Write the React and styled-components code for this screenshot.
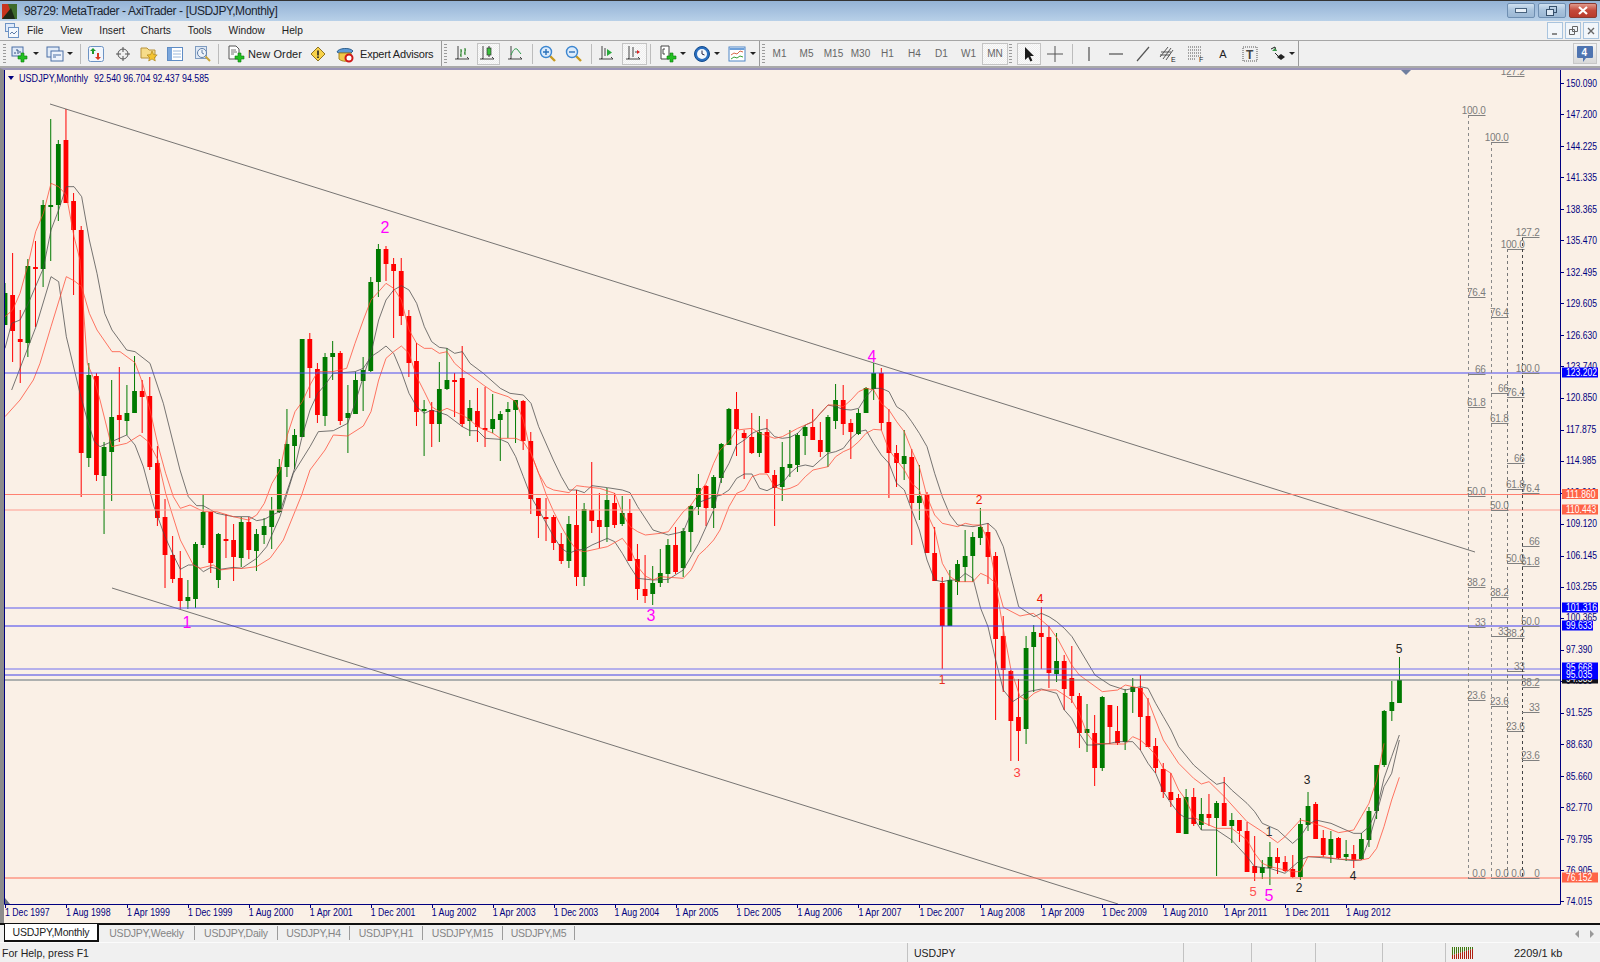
import React from 'react'
import styled, { createGlobalStyle } from 'styled-components'

const GlobalStyle = createGlobalStyle`
    html, body { margin: 0; padding: 0; background: #f0f0f0; overflow: hidden; }
    body { font-family: "Liberation Sans", Arial, sans-serif; color: #222; }
`

const Window = styled.div`
    width: 1600px;
    height: 962px;
    display: flex;
    flex-direction: column;
    overflow: hidden;
`

// Title bar

const TitleBar = styled.div`
    height: 20px;
    flex: none;
    display: flex;
    align-items: center;
    border-top: 1px solid #333;
    background: linear-gradient(#94b3d6, #b8d0e8);
    padding-left: 2px;
`

const TitleText = styled.span`
    margin-left: 7px;
    font-size: 12px;
    letter-spacing: -0.38px;
    color: #1c2530;
`

const WindowButtons = styled.div`
    margin-left: auto;
    margin-right: 3px;
    align-self: flex-start;
    display: flex;
    gap: 3px;
    padding-top: 2px;
`

const WindowButton = styled.div`
    width: ${ p => p.$w }px;
    height: 15px;
    display: flex;
    align-items: center;
    justify-content: center;
    border: 1px solid ${ p => p.$close ? '#8a3a32' : '#6f8fb2' };
    border-radius: 2px;
    box-sizing: border-box;
    background: ${ p => p.$close ? 'linear-gradient(#e09a8c, #c4483a 50%, #b83a2c)' : 'linear-gradient(#cfe0f0, #a8c2dc 50%, #9cb8d4)' };
`

// Menu bar

const MenuBar = styled.div`
    height: 19px;
    flex: none;
    display: flex;
    align-items: center;
    background: #f0f0f0;
    padding-left: 5px;
`

const MenuItem = styled.span`
    font-size: 10.2px;
    color: #222;
    margin-left: ${ p => p.$ml }px;
`

const MdiButtons = styled.div`
    margin-left: auto;
    display: flex;
    gap: 2px;
    padding-right: 1px;
`

const MdiButton = styled.div`
    width: 16px;
    height: 17px;
    border: 1px solid #a9c4de;
    box-sizing: border-box;
    background: #f2f6fa;
    display: flex;
    align-items: center;
    justify-content: center;
`

// Toolbar

const Toolbar = styled.div`
    height: 25px;
    flex: none;
    display: flex;
    align-items: center;
    background: #f0f0f0;
    border-top: 1px solid #a6a6a6;
    border-bottom: 2px solid #a9a9a9;
    padding-left: 3px;
    box-sizing: content-box;
`

const Grip = styled.div`
    width: 3px;
    height: 20px;
    flex: none;
    margin-left: ${ p => p.$ml || 0 }px;
    margin-right: ${ p => p.$mr || 0 }px;
    background: repeating-linear-gradient(#9a9a9a 0 1px, transparent 1px 3px);
`

const ToolSep = styled.div`
    width: 1px;
    height: ${ p => p.$dark ? 25 : 20 }px;
    flex: none;
    margin-left: ${ p => p.$ml }px;
    margin-right: ${ p => p.$mr }px;
    background: ${ p => p.$dark ? '#9b9b9b' : '#bcbcbc' };
`

const ToolButton = styled.div`
    width: ${ p => p.$w || 26 }px;
    height: 22px;
    flex: none;
    margin-left: ${ p => p.$ml || 0 }px;
    padding-left: ${ p => p.$pl || 0 }px;
    display: flex;
    align-items: center;
    justify-content: ${ p => p.$pl ? 'flex-start' : 'center' };
    box-sizing: border-box;
    font-size: 11px;
    color: #222;
    white-space: nowrap;
    ${ p => p.$active && `
        border: 1px solid #c4c4c4;
        background: repeating-conic-gradient(#fafafa 0 25%, #efefef 0 50%) 0 0 / 2px 2px;
    ` }
`

const ToolLabel = styled.span`
    margin-left: ${ p => p.$ml }px;
    font-size: 11px;
    letter-spacing: ${ p => p.$ls }px;
`

const Caret = styled.span`
    width: 0;
    height: 0;
    margin-left: ${ p => p.$ml }px;
    border-left: 3px solid transparent;
    border-right: 3px solid transparent;
    border-top: 3px solid #222;
`

const PeriodButton = styled(ToolButton)`
    font-size: 10px;
    color: #666;
`

const BubbleButton = styled.div`
    margin-left: auto;
    margin-right: 3px;
    width: 24px;
    height: 21px;
    display: flex;
    align-items: center;
    justify-content: center;
    background: linear-gradient(#f4f4f4, #d9d9d9);
    border: 1px solid #c8c8c8;
    box-sizing: border-box;
`

// Chart

const ChartArea = styled.div`
    flex: 1;
    min-height: 0;
    background: #faf0e6;
    border-top: 2px solid #9a94b8;
    border-left: 4px solid #8c8c8c;
    box-sizing: border-box;
`

const ChartSvg = styled.svg`
    display: block;
    width: 1596px;
    height: 853px;
`

const ScaleText = styled.text`
    font-family: "Liberation Sans", Arial, sans-serif;
    font-size: 10px;
    fill: ${ p => p.$fill || '#000080' };
`

const FibText = styled.text`
    font-family: "Liberation Sans", Arial, sans-serif;
    font-size: 10px;
    letter-spacing: -0.25px;
    fill: #7c7c7c;
    text-anchor: end;
`

const WaveText = styled.text`
    font-family: "Liberation Sans", Arial, sans-serif;
    font-size: ${ p => p.$size }px;
    fill: ${ p => p.$fill };
    text-anchor: middle;
`

// Tabs and status bar

const TabBar = styled.div`
    height: 17px;
    flex: none;
    display: flex;
    align-items: stretch;
    border-top: 2px solid #111;
    background: #f0f0f0;
    padding-left: 4px;
`

const ActiveTab = styled.div`
    width: 95px;
    height: 18px;
    margin-top: -1px;
    flex: none;
    display: flex;
    align-items: center;
    justify-content: center;
    background: #fff;
    border: 1px solid #111;
    border-top: 0;
    border-right-width: 2px;
    border-bottom-width: 2px;
    box-sizing: border-box;
    font-size: 10.5px;
    letter-spacing: -0.02em;
    color: #222;
`

const Tab = styled.div`
    width: ${ p => p.$w }px;
    height: 14px;
    margin-top: 1px;
    flex: none;
    display: flex;
    align-items: center;
    justify-content: center;
    border-right: 1px solid #9c9c9c;
    box-sizing: border-box;
    font-size: 10.5px;
    letter-spacing: -0.02em;
    color: #858585;
`

const TabArrows = styled.div`
    margin-left: auto;
    margin-right: 6px;
    display: flex;
    align-items: center;
    gap: 11px;
`

const TabArrow = styled.span`
    width: 0;
    height: 0;
    border-top: 4px solid transparent;
    border-bottom: 4px solid transparent;
    ${ p => p.$right ? 'border-left: 4px solid #999;' : 'border-right: 4px solid #999;' }
`

const StatusBar = styled.div`
    height: 20px;
    flex: none;
    display: flex;
    align-items: center;
    border-top: 1px solid #fbfbfb;
    background: #f0f0f0;
    font-size: 10.5px;
    color: #222;
    box-sizing: border-box;
`

const StatusCell = styled.div`
    width: ${ p => p.$w }px;
    height: 19px;
    flex: none;
    display: flex;
    align-items: center;
    padding-left: ${ p => p.$pl || 0 }px;
    box-sizing: border-box;
    border-right: ${ p => p.$plain ? 0 : '1px solid #c2c2c2' };
`

const MemoryText = styled.span`
    margin-left: 40px;
    font-size: 11px;
`

// Icons

const Svg = ({ w = 18, h = 18, vb, children }) => (
    <svg width={ w } height={ h } viewBox={ vb || `0 0 ${ w } ${ h }` }>{ children }</svg>
)

const Plus = ({ x, y, s = 1 }) => (
    <path
        transform={ `translate(${ x } ${ y }) scale(${ s })` }
        d="M3 0h3v3h3v3h-3v3h-3v-3h-3v-3h3z"
        fill="#22c022" stroke="#0f7a0f" strokeWidth="0.6"
    />
)

const Axes = () => <path d="M3 1v13M0 14h14M3 14l-1-1M14 14l-2-2" stroke="#444" fill="none" />

const NewChartIcon = () => (
    <Svg>
        <rect x="1" y="2" width="11" height="9" fill="#dfe9f7" stroke="#4a6fa5" />
        <path d="M3 8h2M5 5h2v4M8 7h2" stroke="#2f4f80" fill="none" />
        <Plus x={ 7 } y={ 8 } />
    </Svg>
)
const ProfilesIcon = () => (
    <Svg>
        <rect x="1" y="2" width="12" height="10" fill="#e3ecf8" stroke="#4a6fa5" />
        <rect x="5" y="6" width="12" height="10" fill="#eef3fb" stroke="#4a6fa5" />
        <path d="M7 10h8M7 12h3" stroke="#4a6fa5" />
    </Svg>
)
const WatchIcon = () => (
    <Svg>
        <rect x="1.5" y="1.5" width="15" height="15" rx="2" fill="#f2f6fc" stroke="#6d93c4" />
        <path d="M6 3l3 3H7v3H5V6H3z" fill="#1f9a2a" />
        <path d="M11 15l-3-3h2V8h2v4h2z" fill="#d93a20" />
    </Svg>
)
const CrossIcon = () => (
    <Svg>
        <circle cx="9" cy="9" r="5" fill="none" stroke="#555" />
        <path d="M9 2v5M9 11v5M2 9h5M11 9h5" stroke="#555" />
    </Svg>
)
const StarFolderIcon = () => (
    <Svg>
        <path d="M1 3h6l2 2h6v8H1z" fill="#f6dc8a" stroke="#b8923a" />
        <path d="M12 6l1.6 3.6 3.6.4-2.7 2.4.8 3.6-3.3-2-3.3 2 .8-3.6L7 10l3.6-.4z" fill="#f4c430" stroke="#a67c12" strokeWidth="0.6" />
    </Svg>
)
const TerminalIcon = () => (
    <Svg>
        <rect x="1.5" y="2.5" width="15" height="13" fill="#fff" stroke="#5f8cc4" />
        <rect x="2" y="3" width="4" height="12" fill="#7aa6dc" />
        <path d="M7 6h8M7 9h8M7 12h8" stroke="#9cb8da" />
    </Svg>
)
const TesterIcon = () => (
    <Svg>
        <rect x="1.5" y="1.5" width="11" height="12" fill="#dfe8f4" stroke="#7f9cc0" />
        <circle cx="8" cy="8" r="4.5" fill="#eef3f9" stroke="#5f7ea8" />
        <path d="M8 5v3l2 1" stroke="#5f7ea8" fill="none" />
        <path d="M11.5 11.5l4.5 4.5" stroke="#c9a43a" strokeWidth="2" />
    </Svg>
)
const OrderIcon = () => (
    <Svg>
        <path d="M2 1h7l3 3v10H2z" fill="#fff" stroke="#555" />
        <path d="M4 5h5M4 7h6M4 9h3" stroke="#777" />
        <Plus x={ 8 } y={ 8 } />
    </Svg>
)
const WarningIcon = () => (
    <Svg w={ 16 } h={ 16 }>
        <path d="M8 1l7 7-7 7-7-7z" fill="#f8d24a" stroke="#8f7420" />
        <path d="M8 4.5v5" stroke="#222" strokeWidth="1.6" />
        <rect x="7.2" y="10.4" width="1.6" height="1.6" fill="#222" />
    </Svg>
)
const ExpertIcon = () => (
    <Svg>
        <path d="M1 7c1-4 13-5 16-1l-2 2H3z" fill="#5d9ad6" stroke="#2f618f" />
        <path d="M3 8h12v6c-2 3-9 3-12 0z" fill="#f0c84a" stroke="#a68620" />
        <circle cx="13" cy="13" r="3.5" fill="#fff" stroke="#d01818" strokeWidth="2" />
    </Svg>
)
const BarsIcon = () => (
    <Svg>
        <Axes />
        <path d="M6 4v8M5 10h1M6 6h1M10 3v7M9 8h1M10 5h1" stroke="#1a7a1a" fill="none" />
    </Svg>
)
const CandleIcon = () => (
    <Svg>
        <Axes />
        <path d="M9 1v11" stroke="#333" />
        <rect x="7" y="3" width="4" height="7" fill="#3cc03c" stroke="#333" strokeWidth="0.7" />
    </Svg>
)
const LineIcon = () => (
    <Svg>
        <Axes />
        <path d="M3 10c2-5 4-7 6-6l4 5" stroke="#2c9a4a" fill="none" />
    </Svg>
)
const ZoomIcon = ({ plus }) => (
    <Svg>
        <path d="M11 11l5 5" stroke="#c89a20" strokeWidth="2.4" />
        <circle cx="7" cy="7" r="5.5" fill="#dcebfb" stroke="#3c86d0" strokeWidth="1.4" />
        <path d={ plus ? 'M4 7h6M7 4v6' : 'M4 7h6' } stroke="#2a70b8" strokeWidth="1.4" />
    </Svg>
)
const AutoScrollIcon = () => (
    <Svg>
        <Axes />
        <path d="M6 3v8" stroke="#444" />
        <path d="M8 4l5 3.5-5 3.5z" fill="#27a83a" />
    </Svg>
)
const ShiftIcon = () => (
    <Svg>
        <Axes />
        <path d="M7 2v10" stroke="#444" />
        <path d="M9 7h3" stroke="#444" />
        <path d="M14 7l-3-2v4z" fill="#d22" />
    </Svg>
)
const IndicatorIcon = () => (
    <Svg>
        <path d="M2 1h8v13H2z" fill="#fff" stroke="#444" />
        <path d="M4 4h2M4 4v5h2" stroke="#444" fill="none" />
        <Plus x={ 8 } y={ 8 } />
    </Svg>
)
const ClockIcon = () => (
    <Svg>
        <circle cx="9" cy="9" r="7.5" fill="#2a6fc0" stroke="#124a8c" />
        <circle cx="9" cy="9" r="5" fill="#f4f8fc" />
        <path d="M9 5.5V9l2.5 1" stroke="#224" fill="none" />
    </Svg>
)
const TemplateIcon = () => (
    <Svg>
        <rect x="1" y="2" width="16" height="14" fill="#fff" stroke="#4f86c6" />
        <path d="M1.5 3h15v2h-15z" fill="#6fa1da" />
        <path d="M3 10l3-2 3 1 3-3 3 1" stroke="#d86a4a" fill="none" />
        <path d="M3 14l3-2 3 1 3-2 3 1" stroke="#3aa03a" fill="none" />
    </Svg>
)
const CursorIcon = () => (
    <Svg>
        <path d="M5 2v13l3.2-3 2.2 4.5 2-1-2.2-4.4H14z" fill="#1a1a1a" />
    </Svg>
)
const PlusLineIcon = () => <Svg><path d="M9 1v16M1 9h16" stroke="#555" /></Svg>
const VLineIcon = () => <Svg><path d="M9 2v14" stroke="#666" strokeWidth="1.4" /></Svg>
const HLineIcon = () => <Svg><path d="M2 9h14" stroke="#666" strokeWidth="1.4" /></Svg>
const TrendIcon = () => <Svg><path d="M3 16L15 2" stroke="#555" strokeWidth="1.2" /></Svg>
const ChannelIcon = () => (
    <Svg w={ 20 } vb="0 0 20 18">
        <path d="M1 12L9 2M4 14L12 3M7 15L14 5M2 7h10M1 10h10" stroke="#555" fill="none" />
        <text x="12" y="17" fontSize="7" fill="#222" fontFamily="Liberation Sans">E</text>
    </Svg>
)
const FiboIcon = () => (
    <Svg w={ 20 } vb="0 0 20 18">
        <path d="M2 2h13M2 5h13M2 8h13M2 11h13M2 14h8" stroke="#555" strokeDasharray="1 1" fill="none" />
        <text x="13" y="17" fontSize="7" fill="#222" fontFamily="Liberation Sans">F</text>
    </Svg>
)
const LabelIcon = () => (
    <Svg>
        <path d="M2 2h14v14H2z" fill="none" stroke="#555" strokeDasharray="1 1" />
        <text x="5" y="14" fontSize="12" fontWeight="bold" fill="#444" fontFamily="Liberation Sans">T</text>
    </Svg>
)
const ArrowsIcon = () => (
    <Svg>
        <path d="M2 4l4-2 1 4M6 8l3 3" stroke="#222" fill="none" />
        <path d="M8 12l4-3 4 3-4 3z" fill="#222" />
        <path d="M3 6l3-3 2 3z" fill="#3a9a4a" />
    </Svg>
)
const BubbleIcon = () => (
    <svg width="18" height="18" viewBox="0 0 18 18">
        <path d="M2 1h14a1 1 0 0 1 1 1v10a1 1 0 0 1-1 1h-6l-3 4v-4H2a1 1 0 0 1-1-1V2a1 1 0 0 1 1-1z" fill="#4f74b0" />
        <text x="5.5" y="11" fontSize="10" fontWeight="bold" fill="#fff" fontFamily="Liberation Sans">4</text>
    </svg>
)
const AppLogo = () => (
    <svg width="15" height="15" viewBox="0 0 15 15">
        <rect width="15" height="15" fill="#7d1c14" />
        <path d="M0 0h15v6L8 15H0z" fill="#c8341e" />
        <path d="M6 0h9v15H11z" fill="#3f6b2c" />
        <path d="M0 15L9 4l4 11z" fill="#1e2a18" />
    </svg>
)
const MenuChartIcon = () => (
    <svg width="14" height="15" viewBox="0 0 14 15">
        <rect x="0.5" y="0.5" width="9" height="8" fill="#dfeafa" stroke="#6d93c4" />
        <rect x="3.5" y="4.5" width="10" height="10" fill="#f4f8fd" stroke="#6d93c4" />
        <path d="M5 11l2-2 2 2 3-3" stroke="#5f7ea8" fill="none" />
    </svg>
)
const SignalIcon = () => (
    <svg width="22" height="12" viewBox="0 0 22 12">
        { Array.from({ length: 11 }, (_, i) => (
            <g key={ i }>
                <path d={ `M${ i * 2 + 0.5 } 0V${ 8 - i * 0.6 }` } stroke="#3f7a10" />
                <path d={ `M${ i * 2 + 0.5 } ${ 8 - i * 0.6 }V12` } stroke="#b02010" />
            </g>
        )) }
    </svg>
)

// Bars are [colour, high, body top, body bottom, low] in page pixels, read off the screenshot
const bars = [
    ['g',283,293,325,325],['r',253,295,331,362],['r',310,339,342,383],['g',259,266,343,357],['r',241,267,269,327],
    ['g',200,205,269,287],['g',119,205,207,261],['g',140,144,205,221],['r',109,140,203,203],['r',193,201,230,295],
    ['r',226,230,453,497],['g',363,375,458,467],['r',373,376,475,481],['g',442,447,476,534],['g',380,417,452,501],
    ['r',367,415,420,442],['g',385,413,421,435],['g',356,391,413,413],['r',380,391,397,433],['r',377,396,467,470],
    ['r',446,463,518,526],['r',499,517,555,588],['r',536,555,579,583],['r',551,578,601,609],['g',580,597,601,609],
    ['g',542,544,599,608],['g',495,512,545,548],['r',512,512,563,573],['g',533,534,580,588],['r',514,539,541,558],
    ['r',524,540,557,581],['g',517,522,558,567],['r',517,522,550,559],['g',529,534,551,571],['g',518,526,535,544],
    ['g',497,510,527,549],['g',459,467,512,513],['g',409,444,467,477],['g',429,435,446,469],['g',339,339,437,437],
    ['r',333,339,368,398],['r',363,369,415,423],['g',353,357,416,426],['g',341,353,357,380],['r',351,353,421,425],
    ['g',385,413,418,453],['g',372,380,414,414],['g',357,370,381,411],['g',277,282,371,372],['g',244,249,282,297],
    ['r',246,249,264,281],['r',258,264,271,338],['r',258,271,316,325],['r',310,316,363,377],['r',343,361,412,426],
    ['g',400,409,411,456],['r',402,410,424,447],['g',362,389,424,442],['g',348,380,389,390],['r',373,380,381,417],
    ['r',346,378,424,427],['g',400,408,421,436],['r',388,411,427,442],['r',387,428,429,447],['g',394,419,429,433],
    ['g',411,414,420,461],['g',402,409,412,438],['g',400,400,410,443],['r',400,401,441,450],['r',432,441,499,514],
    ['r',498,498,516,538],['r',498,517,518,541],['r',515,517,543,550],['r',533,544,561,564],['g',516,524,561,568],
    ['r',490,525,577,586],['g',503,509,577,586],['r',462,510,521,533],['r',493,520,527,548],['g',488,500,527,542],
    ['r',493,503,525,528],['g',496,513,524,526],['r',499,513,561,561],['r',544,559,589,600],['r',555,589,596,603],
    ['g',566,583,594,605],['g',549,573,583,587],['g',539,545,574,583],['r',527,545,572,574],['g',528,531,568,577],
    ['g',505,506,532,552],['g',474,488,507,515],['r',485,486,508,526],['g',475,477,508,528],['g',443,444,478,483],
    ['g',408,409,445,445],['r',392,409,429,456],['r',430,433,438,479],['r',413,437,453,454],['g',416,432,453,457],
    ['r',419,432,473,473],['r',470,475,488,526],['g',442,467,487,501],['g',430,464,468,477],['g',433,435,465,472],
    ['g',425,427,436,455],['r',409,427,440,440],['r',422,440,452,457],['g',415,417,452,467],['g',384,400,421,429],
    ['r',385,400,424,435],['r',419,423,432,459],['g',409,413,434,435],['g',387,388,413,413],['g',363,373,389,400],
    ['r',368,373,423,430],['r',409,422,453,498],['r',445,453,463,487],['g',430,456,464,480],['r',449,457,503,545],
    ['g',465,496,503,520],['r',492,495,553,553],['r',527,553,581,581],['r',577,583,626,669],['g',570,580,626,626],
    ['g',560,564,582,595],['g',530,556,567,582],['g',532,537,556,582],['g',508,527,538,545],['r',523,532,557,584],
    ['r',552,556,639,720],['r',616,636,670,692],['r',670,671,721,761],['r',679,717,731,761],['g',636,648,729,744],
    ['g',625,632,647,692],['r',607,633,637,669],['r',626,637,673,688],['g',633,661,674,682],['r',655,661,689,710],
    ['r',646,678,696,703],['r',693,696,733,748],['g',704,729,733,752],['r',715,733,768,786],['g',696,697,768,771],
    ['r',705,705,727,744],['r',706,731,743,745],['g',689,693,742,750],['g',678,687,692,713],['r',675,688,717,750],
    ['r',698,716,747,747],['r',738,746,768,773],['r',763,769,792,798],['r',773,792,800,807],['r',794,798,833,833],
    ['g',789,797,834,834],['r',788,797,824,826],['g',798,814,825,830],['r',794,814,818,826],['g',801,803,818,876],
    ['r',777,803,826,826],['g',813,820,826,843],['r',820,820,831,842],['r',822,831,872,872],['r',836,866,873,881],
    ['g',860,867,873,879],['g',842,857,868,885],['r',848,857,863,874],['r',856,862,871,872],['r',855,869,877,878],
    ['g',818,824,877,880],['g',792,806,825,831],['r',802,804,839,839],['r',830,838,855,857],['g',831,839,855,863],
    ['r',837,838,858,859],['g',840,854,857,861],['r',845,854,860,868],['g',833,839,859,860],['g',807,811,840,847],
    ['g',765,765,811,819],['g',710,711,765,767],['g',681,702,711,721],['g',657,680,703,703],
]

const BAR_STEP = 7.62
const barX = i => 5 + i * BAR_STEP

// The crops were 3x, so the traced points go back to page pixels from the crop origin
const trace = (ox, oy, pts) => pts.map(([x, y]) => [ox + x / 3, oy + y / 3])

const blackA = [
    ...trace(0, 90, [[15,775],[35,700],[60,690],[85,640],[130,535],[153,420],[176,360],[199,290],[222,290],[245,320],[268,450],[291,550],[314,670],[336,720],[380,780],[405,785],[450,820]]),
    ...trace(0, 360, [[490,130],[540,330],[565,410],[590,437],[610,437],[650,460],[700,470],[748,470],[770,482],[793,478],[816,465],[840,455],[862,390],[884,325],[905,235],[930,150],[953,100],[975,75],[1000,40]]),
    ...trace(340, 220, [[45,455],[70,445],[93,410],[116,395],[138,378],[161,400],[184,455],[207,520],[230,560],[253,580],[275,570],[321,585],[367,620],[390,632],[413,632],[436,655],[481,658],[504,668],[527,710],[550,770],[573,830],[619,910],[641,950],[664,985],[687,1000],[710,990],[733,988],[756,975],[802,955],[824,965],[847,1000],[870,1040],[893,1075],[939,1080],[985,1078],[1030,1050],[1076,970],[1121,870]]),
    ...trace(700, 350, [[65,380],[87,340],[110,285],[133,270],[156,250],[179,240],[201,235],[224,260],[247,265],[270,262],[293,250],[316,225],[339,215],[361,190],[384,165],[407,170],[430,178],[453,180],[476,175],[498,140],[521,115],[544,115],[567,125],[590,170],[613,185],[635,215],[658,250],[681,290],[704,370],[727,440],[750,495],[773,525],[819,530],[842,525],[864,520],[887,540],[910,590],[933,680],[956,770],[979,785],[1002,800],[1024,790],[1047,800],[1070,815],[1093,835],[1116,860]]),
    ...trace(1000, 640, [[285,105],[330,135],[376,150],[421,140],[444,145],[467,190],[490,230],[513,270],[536,320],[581,375],[627,415],[650,433],[673,427],[695,450],[741,490],[764,515],[787,550],[810,560],[833,570],[855,590],[878,610],[901,590],[924,555],[947,540],[993,550],[1038,570],[1061,580],[1084,580],[1107,560],[1130,510],[1152,415],[1175,350],[1198,285]]),
]

const blackB = [
    ...trace(0, 90, [[35,900],[108,710],[153,560],[176,575],[199,740]]),
    ...trace(0, 360, [[240,100],[262,180],[283,245],[300,260],[335,245],[380,225],[405,255],[430,320],[462,440],[495,530],[520,585],[541,628],[565,615],[588,615],[610,635],[633,622],[660,628],[700,622],[725,625],[770,595],[800,560],[840,470],[880,340],[930,260],[955,215],[1000,212]]),
    ...trace(340, 220, [[23,610],[45,550],[70,470],[93,400],[116,300],[138,240],[161,210],[184,197],[207,210],[230,250],[253,320],[275,365],[298,382],[321,385],[344,400],[367,395],[390,430],[430,460],[481,505],[510,520],[550,525],[573,550],[596,620],[640,720],[664,770],[687,810],[710,810],[733,818],[756,797],[802,803],[847,810],[870,818],[893,860],[939,930],[985,945],[1030,935],[1053,880]]),
    ...trace(700, 350, [[0,456],[41,440],[64,435],[87,420],[110,385],[133,372],[156,372],[179,415],[201,422],[224,410],[247,400],[270,370],[293,350],[316,345],[339,350],[361,330],[384,310],[407,305],[430,295],[453,265],[476,245],[498,240],[521,280],[544,315],[567,340],[590,400],[613,420],[635,480],[658,540],[681,630],[704,690],[727,695],[750,690],[773,690],[796,670],[819,685],[842,775],[864,830],[887,930],[910,1020]]),
    ...trace(1000, 640, [[38,185],[61,170],[84,155],[124,147],[170,160],[193,210],[215,235],[238,280],[261,315],[284,315],[330,310],[353,305],[398,305],[421,330],[444,370],[467,400],[490,455],[513,490],[536,520],[558,535],[581,535],[604,570],[650,570],[695,600],[741,650],[764,680],[810,685],[855,700],[878,680],[901,660],[924,650],[993,655],[1061,662],[1084,660],[1107,600],[1130,520],[1152,440],[1175,400],[1198,300]]),
]

const redA = [
    ...trace(0, 90, [[15,680],[38,660],[60,610],[85,520],[107,425],[130,370],[153,280],[176,290],[199,315],[222,440],[240,510]]),
    ...trace(0, 360, [[262,10],[283,60],[300,120],[335,260],[380,250],[420,225],[445,245],[474,300],[497,400],[541,540],[580,615],[600,625],[640,615],[660,630],[700,625],[730,625],[770,620],[810,595],[850,540],[905,405],[930,330],[975,270],[1000,225]]),
    ...trace(340, 220, [[23,648],[70,618],[93,575],[116,480],[138,415],[161,395],[184,378],[207,400],[230,470],[253,515],[275,560],[298,575],[321,565],[367,585],[390,600],[413,620],[436,630],[459,640],[481,655],[527,655],[550,665],[573,700],[596,760],[619,825],[641,875],[664,920],[687,960],[710,990],[733,995],[756,990],[802,980],[847,955],[870,985],[893,1040],[916,1068],[939,1080],[961,1070],[1030,1075],[1053,1050],[1076,1005],[1098,985],[1121,960]]),
    ...trace(700, 350, [[60,540],[87,470],[110,430],[133,420],[156,380],[179,372],[201,372],[224,410],[247,420],[270,415],[293,405],[316,380],[339,360],[384,350],[407,320],[430,305],[453,295],[476,275],[498,250],[521,238],[544,240],[567,300],[590,330],[613,360],[635,400],[658,420],[681,490],[704,540],[727,640],[750,680],[773,695],[819,695],[842,670],[864,680],[887,700],[905,810],[933,960],[960,1040],[979,1050],[1002,1030],[1024,1020],[1070,1020]]),
    ...trace(1000, 640, [[193,165],[215,180],[238,220],[261,280],[284,310],[330,312],[376,312],[398,290],[421,300],[444,320],[467,345],[490,385],[513,400],[536,450],[558,480],[581,530],[604,545],[650,565],[695,565],[741,600],[764,640],[787,670],[810,680],[855,690],[878,695],[901,695],[924,650],[970,650],[1016,657],[1084,660],[1107,655],[1130,625],[1152,560],[1175,480],[1198,412]]),
]

const redB = [
    ...trace(0, 360, [[15,170],[60,120],[100,60],[120,10]]),
    ...trace(0, 90, [[153,710],[199,560],[222,572],[245,590],[268,670],[291,720],[336,785],[360,785],[405,818],[428,880]]),
    ...trace(0, 360, [[450,150],[475,260],[497,340],[520,410],[541,445],[570,435],[611,455],[650,455],[700,470],[745,480],[770,465],[793,430],[816,370],[840,330],[862,225],[885,155],[907,125],[930,75],[953,35],[998,35]]),
    ...trace(340, 220, [[20,445],[45,370],[70,300],[93,240],[116,215],[138,190],[161,205],[184,240],[207,330],[230,370],[253,385],[275,385],[298,400],[321,395],[344,430],[367,450],[390,465],[430,495],[459,515],[504,530],[527,545],[550,600],[573,700],[596,760],[619,800],[641,810],[687,818],[710,797],[733,800],[779,805],[824,820],[847,880],[870,920],[893,935],[916,945],[961,940],[985,935],[1007,905],[1030,875],[1053,855],[1098,790],[1121,730]]),
    ...trace(700, 350, [[60,300],[87,275],[110,240],[156,235],[179,250],[224,265],[247,260],[293,235],[316,225],[339,215],[361,190],[384,165],[407,165],[430,170],[453,150],[476,125],[498,115],[521,120],[544,160],[567,180],[590,215],[613,245],[635,300],[658,350],[681,440],[704,495],[727,520],[773,530],[796,520],[819,525],[842,525],[864,570],[887,690],[910,772],[960,798],[1000,790],[1047,830],[1075,870]]),
    ...trace(1000, 640, [[215,75],[238,105],[307,155],[353,150],[376,135],[421,145],[444,180],[467,240],[490,300],[536,370],[581,415],[604,432],[627,425],[673,470],[741,545],[787,575],[833,608],[855,590],[878,565],[901,540],[924,545],[970,560],[1016,578],[1061,570],[1084,530],[1107,490],[1130,420],[1152,310]]),
]

const bands = [
    { pts: blackA, color: '#4a4a4a' },
    { pts: blackB, color: '#4a4a4a' },
    { pts: redA, color: '#ff4a34' },
    { pts: redB, color: '#ff4a34' },
]

const hLines = [
    { y: 373, color: '#4a4af0' },
    { y: 494.5, color: '#ff8070' },
    { y: 510, color: '#ff9c90' },
    { y: 608, color: '#5a5af0' },
    { y: 626, color: '#3c3cf0' },
    { y: 669, color: '#7070f0' },
    { y: 675, color: '#4040e8' },
    { y: 680, color: '#607078' },
    { y: 878, color: '#ff6a55' },
]

const scaleLabels = ['150.090','147.200','144.225','141.335','138.365','135.470','132.495','129.605','126.630','123.740','120.850','117.875','114.985','112.010','109.120','106.145','103.255','100.365','97.390','94.500','91.525','88.630','85.660','82.770','79.795','76.905','74.015']
const priceY = p => 83 + (150.09 - parseFloat(p)) * 10.757

const priceTags = [
    { text: '94.585', y: 679, bg: '#101018' },
    { text: '123.202', y: 373, bg: '#0000ff' },
    { text: '111.860', y: 494.5, bg: '#ff6347' },
    { text: '110.443', y: 510, bg: '#ff6347' },
    { text: '101.316', y: 608, bg: '#0000ff' },
    { text: '99.633', y: 626, bg: '#0000ff', w: 31 },
    { text: '95.668', y: 668, bg: '#0000ff' },
    { text: '95.035', y: 675, bg: '#0000ff' },
    { text: '76.152', y: 878, bg: '#ff6347' },
]

const dateLabels = ['1 Dec 1997','1 Aug 1998','1 Apr 1999','1 Dec 1999','1 Aug 2000','1 Apr 2001','1 Dec 2001','1 Aug 2002','1 Apr 2003','1 Dec 2003','1 Aug 2004','1 Apr 2005','1 Dec 2005','1 Aug 2006','1 Apr 2007','1 Dec 2007','1 Aug 2008','1 Apr 2009','1 Dec 2009','1 Aug 2010','1 Apr 2011','1 Dec 2011','1 Aug 2012']

const fibs = [
    { x: 1468, top: 115, color: '#8a8a8a', levels: [['100.0',115],['76.4',297],['66',374],['61.8',407],['50.0',496],['38.2',587],['33',627],['23.6',700],['0.0',878]] },
    { x: 1491, top: 142, color: '#8a8a8a', levels: [['100.0',142],['76.4',317],['66',393],['61.8',423],['50.0',510],['38.2',597],['33',636],['23.6',706],['0.0',878]] },
    { x: 1507, top: 249, color: '#777', levels: [['127.2',76],['100.0',249],['76.4',397],['66',463],['61.8',489],['50.0',563],['38.2',638],['33',671],['23.6',731],['0.0',878]] },
    { x: 1522, top: 237, color: '#444', levels: [['127.2',237],['100.0',373],['76.4',493],['66',546],['61.8',566],['50.0',626],['38.2',687],['33',712],['23.6',760],['0',878]] },
]

const waves = [
    { t: '2', x: 385, y: 233, size: 16, fill: '#ff00ff' },
    { t: '1', x: 187, y: 628, size: 16, fill: '#ff00ff' },
    { t: '3', x: 651, y: 621, size: 16, fill: '#ff00ff' },
    { t: '4', x: 872, y: 362, size: 16, fill: '#ff00ff' },
    { t: '5', x: 1269, y: 901, size: 16, fill: '#ff00ff' },
    { t: '1', x: 942, y: 684, size: 12, fill: '#e83020' },
    { t: '2', x: 979, y: 504, size: 12, fill: '#f01000' },
    { t: '4', x: 1040, y: 603, size: 12, fill: '#f01000' },
    { t: '3', x: 1017, y: 777, size: 13, fill: '#ff4040' },
    { t: '5', x: 1253, y: 896, size: 13, fill: '#ff5050' },
    { t: '1', x: 1269, y: 836, size: 12, fill: '#333' },
    { t: '3', x: 1307, y: 784, size: 12, fill: '#222' },
    { t: '2', x: 1299, y: 892, size: 12, fill: '#222' },
    { t: '4', x: 1353, y: 880, size: 12, fill: '#222' },
    { t: '5', x: 1399, y: 653, size: 12, fill: '#222' },
]

const Candle = ({ i, bar }) => {
    const [c, hi, top, bot, lo] = bar
    const fill = c === 'g' ? '#007a00' : '#ff0000'
    const x = barX(i)
    return (
        <>
            <path d={ `M${ x } ${ hi }V${ lo }` } stroke={ fill } />
            <rect x={ x - 2.4 } y={ top } width="4.8" height={ Math.max(bot - top, 2) } fill={ fill } />
        </>
    )
}

// The scale figures in the screenshot are narrower than Liberation Sans
const PriceText = ({ y, fill, children }) => (
    <ScaleText transform={ `translate(1566 ${ y }) scale(0.855 1)` } $fill={ fill }>{ children }</ScaleText>
)

const Chart = () => (
    <ChartSvg viewBox="4 70 1596 853">
        <defs>
            <clipPath id="plot"><rect x="5" y="70" width="1555" height="834" /></clipPath>
        </defs>
        <g clipPath="url(#plot)" fill="none">
            { bars.map((bar, i) => <Candle key={ i } i={ i } bar={ bar } />) }
            { bands.map((b, i) => (
                <polyline key={ i } points={ b.pts.map(p => p.join(',')).join(' ') } stroke={ b.color } strokeWidth="1" strokeLinejoin="round" opacity="0.75" />
            )) }
            <path d="M50 104L1475 552M112 588L1118 904" stroke="#555" strokeWidth="1" opacity="0.8" />
            { hLines.map(l => <path key={ l.y } d={ `M5 ${ l.y }H1560` } stroke={ l.color } />) }
            { fibs.map(f => (
                <g key={ f.x }>
                    <path d={ `M${ f.x + 0.5 } ${ f.top }V878` } stroke={ f.color } strokeDasharray="3 3" />
                    { f.levels.map(([label, y]) => (
                        <g key={ label }>
                            <path d={ `M${ f.x } ${ y + 0.5 }h17.5` } stroke="#808080" />
                            <FibText x={ f.x + 17.5 } y={ y - 1.5 }>{ label }</FibText>
                        </g>
                    )) }
                </g>
            )) }
            { waves.map((w, i) => <WaveText key={ i } x={ w.x } y={ w.y } $size={ w.size } $fill={ w.fill }>{ w.t }</WaveText>) }
        </g>

        <path d="M4.5 70V904.5H1560.5V70" fill="none" stroke="#000080" />
        <path d="M1401 70h10l-5 5z" fill="#6f7f9f" />
        <path d="M5 904v-6l5 6z" fill="#6a7080" />
        <path d="M8 76h6l-3 4z" fill="#000080" />
        <ScaleText x="19" y="81.5" textLength="69" lengthAdjust="spacingAndGlyphs">USDJPY,Monthly</ScaleText>
        <ScaleText x="94" y="81.5" textLength="115" lengthAdjust="spacingAndGlyphs">92.540 96.704 92.437 94.585</ScaleText>

        { scaleLabels.map(p => (
            <g key={ p }>
                <path d={ `M1561 ${ Math.round(priceY(p)) + 0.5 }h3` } stroke="#000080" />
                <PriceText y={ priceY(p) + 3.5 }>{ p }</PriceText>
            </g>
        )) }
        { priceTags.map(t => (
            <g key={ t.text }>
                <rect x="1562" y={ t.y - 5.5 } width={ t.w || 36 } height="10" fill={ t.bg } />
                <PriceText y={ t.y + 3 } fill="#fff">{ t.text }</PriceText>
            </g>
        )) }
        { dateLabels.map((d, i) => {
            const x = 5 + i * BAR_STEP * 8
            return (
                <g key={ d }>
                    <path d={ `M${ Math.round(x) + 0.5 } 905v3` } stroke="#000080" />
                    <ScaleText x={ x } y="916" textLength={ d.includes('Apr') ? 43 : 44.6 } lengthAdjust="spacingAndGlyphs">{ d }</ScaleText>
                </g>
            )
        }) }
    </ChartSvg>
)

const periods = ['M1', 'M5', 'M15', 'M30', 'H1', 'H4', 'D1', 'W1']

const App = () => (
    <Window>
        <GlobalStyle />
        <TitleBar>
            <AppLogo />
            <TitleText>98729: MetaTrader - AxiTrader - [USDJPY,Monthly]</TitleText>
            <WindowButtons>
                <WindowButton $w={ 28 }><svg width="12" height="6"><rect x="0.5" y="0.5" width="11" height="4" fill="#e8f0f8" stroke="#48627e" /></svg></WindowButton>
                <WindowButton $w={ 28 }><svg width="12" height="10"><rect x="3.5" y="0.5" width="7" height="6" fill="none" stroke="#36506c" /><rect x="0.5" y="3.5" width="7" height="6" fill="#dce8f4" stroke="#36506c" /></svg></WindowButton>
                <WindowButton $w={ 28 } $close><svg width="12" height="9"><path d="M2 1l8 7M10 1l-8 7" stroke="#fff" strokeWidth="2.2" /></svg></WindowButton>
            </WindowButtons>
        </TitleBar>

        <MenuBar>
            <MenuChartIcon />
            <MenuItem $ml={ 8 }>File</MenuItem>
            <MenuItem $ml={ 17 }>View</MenuItem>
            <MenuItem $ml={ 17 }>Insert</MenuItem>
            <MenuItem $ml={ 16 }>Charts</MenuItem>
            <MenuItem $ml={ 17 }>Tools</MenuItem>
            <MenuItem $ml={ 17 }>Window</MenuItem>
            <MenuItem $ml={ 17 }>Help</MenuItem>
            <MdiButtons>
                <MdiButton><svg width="8" height="8"><path d="M1 7h5" stroke="#666" strokeWidth="1.5" /></svg></MdiButton>
                <MdiButton><svg width="9" height="9"><path d="M3.5.5h5v5h-5zM.5 3.5h5v5h-5z" fill="#f2f6fa" stroke="#666" /></svg></MdiButton>
                <MdiButton><svg width="8" height="8"><path d="M1 1l6 6M7 1L1 7" stroke="#666" strokeWidth="1.4" /></svg></MdiButton>
            </MdiButtons>
        </MenuBar>

        <Toolbar>
            <Grip />
            <ToolButton $w={ 33 } $pl={ 5 }><NewChartIcon /><Caret $ml={ 4 } /></ToolButton>
            <ToolButton $w={ 37 } $pl={ 7 }><ProfilesIcon /><Caret $ml={ 3 } /></ToolButton>
            <ToolSep $ml={ 4 } $mr={ 2 } />
            <ToolButton><WatchIcon /></ToolButton>
            <ToolButton $w={ 27 }><CrossIcon /></ToolButton>
            <ToolButton><StarFolderIcon /></ToolButton>
            <ToolButton><TerminalIcon /></ToolButton>
            <ToolButton $w={ 29 }><TesterIcon /></ToolButton>
            <ToolSep $ml={ 1 } $mr={ 2 } />
            <ToolButton $w={ 84 } $pl={ 6 }><OrderIcon /><ToolLabel $ml={ 3 } $ls={ 0.1 }>New Order</ToolLabel></ToolButton>
            <ToolButton><WarningIcon /></ToolButton>
            <ToolButton $w={ 106 } $pl={ 5 }><ExpertIcon /><ToolLabel $ml={ 6 } $ls={ -0.2 }>Expert Advisors</ToolLabel></ToolButton>
            <ToolSep $dark $ml={ 4 } $mr={ 2 } />
            <Grip $mr={ 4 } />
            <ToolButton $w={ 25 }><BarsIcon /></ToolButton>
            <ToolButton $w={ 23 } $ml={ 1 } $active><CandleIcon /></ToolButton>
            <ToolButton $w={ 27 } $ml={ 3 }><LineIcon /></ToolButton>
            <ToolSep $ml={ 2 } $mr={ 2 } />
            <ToolButton><ZoomIcon plus /></ToolButton>
            <ToolButton><ZoomIcon /></ToolButton>
            <ToolSep $ml={ 4 } $mr={ 3 } />
            <ToolButton><AutoScrollIcon /></ToolButton>
            <ToolButton $w={ 25 } $ml={ 1 } $active><ShiftIcon /></ToolButton>
            <ToolSep $ml={ 3 } $mr={ 2 } />
            <ToolButton $w={ 34 } $pl={ 6 }><IndicatorIcon /><Caret $ml={ 3 } /></ToolButton>
            <ToolButton $w={ 35 } $pl={ 6 }><ClockIcon /><Caret $ml={ 3 } /></ToolButton>
            <ToolButton $w={ 35 } $pl={ 6 }><TemplateIcon /><Caret $ml={ 4 } /></ToolButton>
            <ToolSep $dark $ml={ 2 } $mr={ 2 } />
            <Grip $mr={ 1 } />
            { periods.map(p => <PeriodButton key={ p } $w={ 27 }>{ p }</PeriodButton>) }
            <PeriodButton $w={ 26 } $active>MN</PeriodButton>
            <Grip $ml={ 1 } $mr={ 5 } />
            <ToolButton $w={ 24 } $active><CursorIcon /></ToolButton>
            <ToolButton $ml={ 1 }><PlusLineIcon /></ToolButton>
            <ToolSep $ml={ 4 } $mr={ 3 } />
            <ToolButton><VLineIcon /></ToolButton>
            <ToolButton $ml={ 1 }><HLineIcon /></ToolButton>
            <ToolButton $ml={ 1 }><TrendIcon /></ToolButton>
            <ToolButton><ChannelIcon /></ToolButton>
            <ToolButton $ml={ 1 }><FiboIcon /></ToolButton>
            <ToolButton $ml={ 1 }>A</ToolButton>
            <ToolButton $ml={ 1 }><LabelIcon /></ToolButton>
            <ToolButton $w={ 32 } $ml={ 1 } $pl={ 5 }><ArrowsIcon /><Caret $ml={ 2 } /></ToolButton>
            <ToolSep $dark $ml={ 2 } $mr={ 0 } />
            <BubbleButton><BubbleIcon /></BubbleButton>
        </Toolbar>

        <ChartArea>
            <Chart />
        </ChartArea>

        <TabBar>
            <ActiveTab>USDJPY,Monthly</ActiveTab>
            <Tab $w={ 96 }>USDJPY,Weekly</Tab>
            <Tab $w={ 83 }>USDJPY,Daily</Tab>
            <Tab $w={ 72 }>USDJPY,H4</Tab>
            <Tab $w={ 73 }>USDJPY,H1</Tab>
            <Tab $w={ 80 }>USDJPY,M15</Tab>
            <Tab $w={ 72 }>USDJPY,M5</Tab>
            <TabArrows><TabArrow /><TabArrow $right /></TabArrows>
        </TabBar>

        <StatusBar>
            <StatusCell $w={ 908 } $pl={ 2 }>For Help, press F1</StatusCell>
            <StatusCell $w={ 276 } $pl={ 6 }>USDJPY</StatusCell>
            <StatusCell $w={ 68 } />
            <StatusCell $w={ 64 } />
            <StatusCell $w={ 67 } />
            <StatusCell $w={ 63 } />
            <StatusCell $w={ 154 } $plain $pl={ 6 }>
                <SignalIcon />
                <MemoryText>2209/1 kb</MemoryText>
            </StatusCell>
        </StatusBar>
    </Window>
)

export default App
